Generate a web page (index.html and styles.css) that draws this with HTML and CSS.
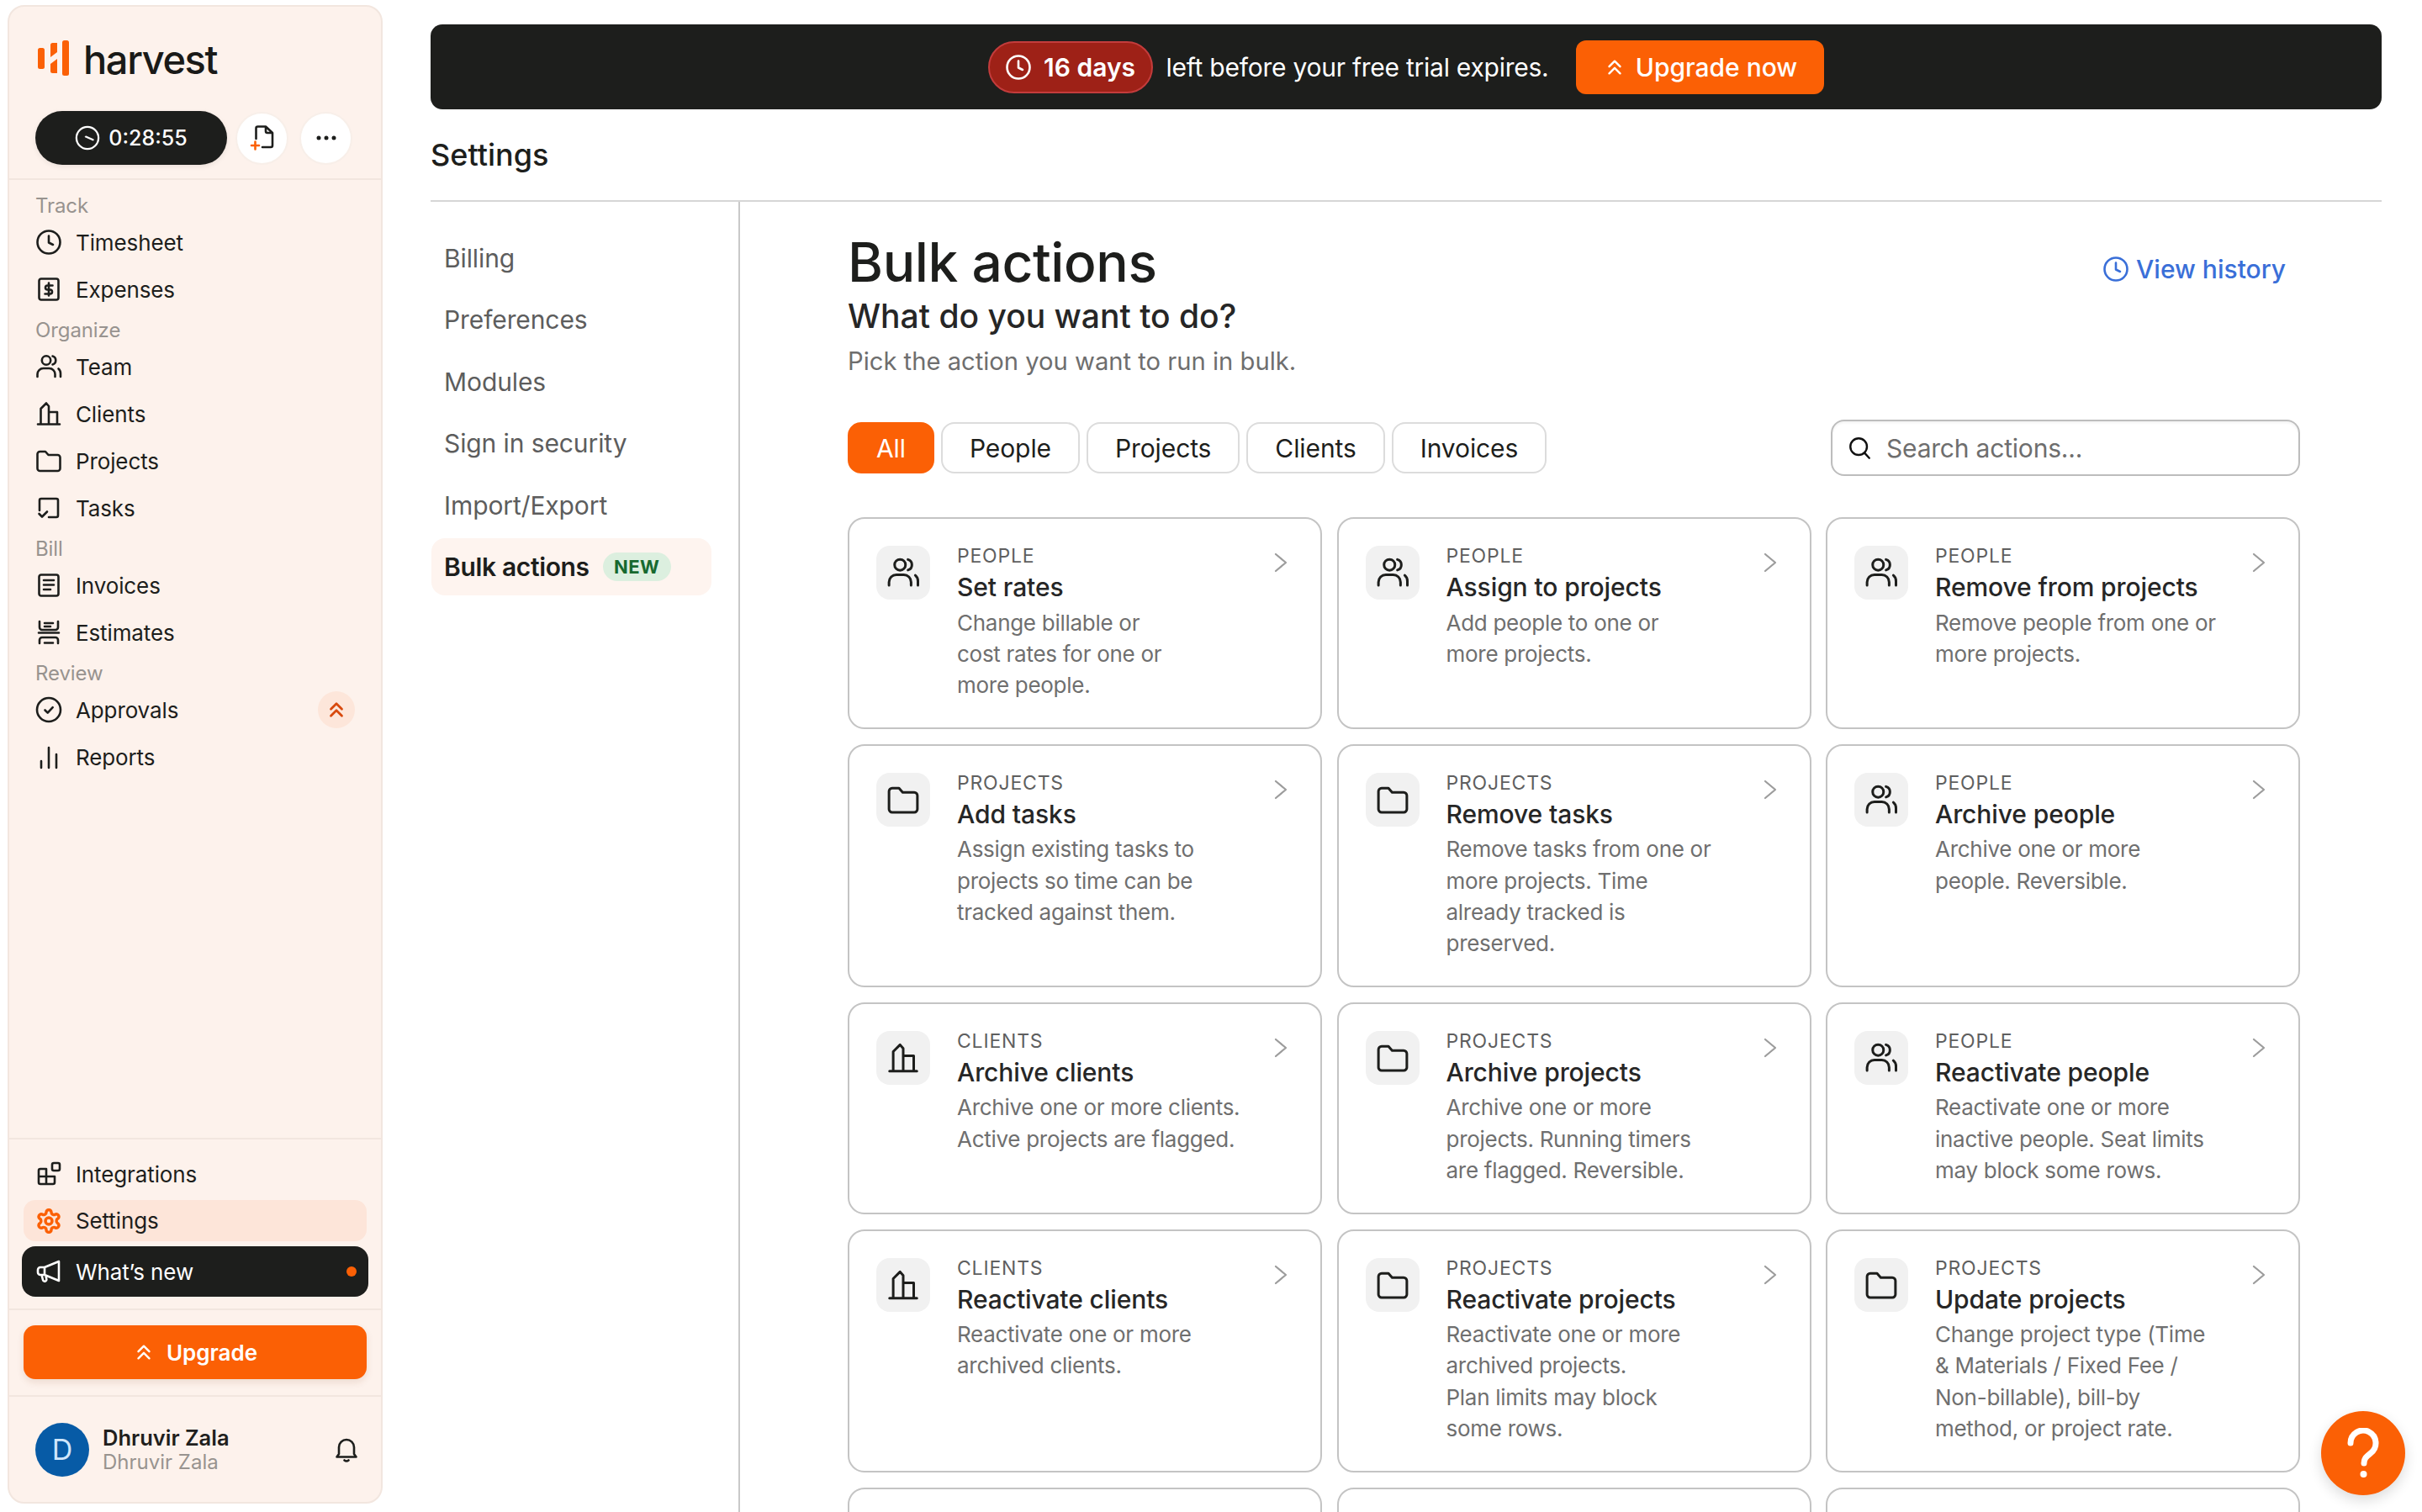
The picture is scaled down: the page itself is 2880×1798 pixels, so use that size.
FILE: index.html
```html
<!DOCTYPE html>
<html lang="en">
<head>
<meta charset="utf-8">
<title>Bulk actions - Harvest</title>
<link rel="stylesheet" href="styles.css">
</head>
<body>
<svg class="sprite" aria-hidden="true">
  <symbol id="i-clock" viewBox="0 0 32 32"><circle cx="16" cy="16" r="13.5"/><path d="M16 8.5V16.5L21 19"/></symbol>
  <symbol id="i-expense" viewBox="0 0 32 32"><rect x="4.5" y="3.5" width="23" height="25" rx="2.5"/><path d="M20.5 11.5H14.500a2.500 2.500 0 0 0 0 5h3a2.500 2.500 0 0 1 0 5H11.500M16 8.500v15"/></symbol>
  <symbol id="i-team" viewBox="0 0 32 32"><circle cx="13" cy="8.500" r="5.200"/><path d="M2.500 28v-3a7 7 0 0 1 7-7h7a7 7 0 0 1 7 7v3M20.500 3.500a5.200 5.200 0 0 1 0 10M27.500 18.500a7 7 0 0 1 2.500 5.500v4"/></symbol>
  <symbol id="i-clients" viewBox="0 0 32 32"><path d="M3 28.500H29M6.500 28.500V10L13 3.500L16 7V28.500M16 14H26V28.500"/></symbol>
  <symbol id="i-folder" viewBox="0 0 32 32"><path d="M2.500 8a3 3 0 0 1 3-3h6.500l3.500 4h11a3 3 0 0 1 3 3v13a3 3 0 0 1-3 3H5.500a3 3 0 0 1-3-3z"/></symbol>
  <symbol id="i-tasks" viewBox="0 0 32 32"><path d="M5 19V7a2 2 0 0 1 2-2h18a2 2 0 0 1 2 2v18a2 2 0 0 1-2 2H16M4.500 23l3.500 3.500l6-6"/></symbol>
  <symbol id="i-invoice" viewBox="0 0 32 32"><rect x="4.500" y="3.500" width="23" height="25" rx="2.500"/><path d="M10 10H22M10 15.500H22M10 21H18"/></symbol>
  <symbol id="i-estimate" viewBox="0 0 32 32"><path d="M5 3v7a3 3 0 0 0 3 3h16a3 3 0 0 0 3-3V3M11 5H21M11 9H18M4 16.500H28M5 29v-4a3 3 0 0 1 3-3h16a3 3 0 0 1 3 3v4M11 28.500H21"/></symbol>
  <symbol id="i-approve" viewBox="0 0 32 32"><circle cx="16" cy="16" r="14"/><path d="M11.500 16.500l3.200 3.200l6-6.500"/></symbol>
  <symbol id="i-reports" viewBox="0 0 32 32"><path d="M7 29V21M16 29V5M25 29V13"/></symbol>
  <symbol id="i-integrations" viewBox="0 0 32 32"><path d="M13 10H6a2 2 0 0 0-2 2V26a2 2 0 0 0 2 2H21a2 2 0 0 0 2-2V19H4M13 10V28"/><rect x="20" y="3" width="9" height="9" rx="2"/></symbol>
  <symbol id="i-gear" viewBox="0 0 24 24"><path d="M12.220 2h-.44a2 2 0 0 0-2 2v.18a2 2 0 0 1-1 1.730l-.43.25a2 2 0 0 1-2 0l-.15-.08a2 2 0 0 0-2.730.73l-.22.38a2 2 0 0 0 .73 2.730l.15.1a2 2 0 0 1 1 1.720v.51a2 2 0 0 1-1 1.740l-.15.09a2 2 0 0 0-.73 2.730l.22.38a2 2 0 0 0 2.730.73l.15-.08a2 2 0 0 1 2 0l.43.25a2 2 0 0 1 1 1.730V20a2 2 0 0 0 2 2h.44a2 2 0 0 0 2-2v-.18a2 2 0 0 1 1-1.730l.43-.25a2 2 0 0 1 2 0l.15.08a2 2 0 0 0 2.730-.73l.22-.39a2 2 0 0 0-.73-2.730l-.15-.08a2 2 0 0 1-1-1.740v-.5a2 2 0 0 1 1-1.740l.15-.09a2 2 0 0 0 .73-2.730l-.22-.38a2 2 0 0 0-2.730-.73l-.15.08a2 2 0 0 1-2 0l-.43-.25a2 2 0 0 1-1-1.730V4a2 2 0 0 0-2-2z"/><circle cx="12" cy="12" r="3"/></symbol>
  <symbol id="i-mega" viewBox="0 0 32 32"><path d="M28 4L11 11H6a3 3 0 0 0-3 3v3a3 3 0 0 0 3 3h5L28 27zM11 11v9M7.500 20l1.500 6a2.200 2.200 0 0 0 4.300-1l-1-4.200"/></symbol>
  <symbol id="i-up" viewBox="0 0 32 32"><path d="M8 15L16 7L24 15M8 25L16 17L24 25"/></symbol>
  <symbol id="i-bell" viewBox="0 0 32 32"><path d="M7 21V13a9 9 0 0 1 18 0v8l2.500 3.500H4.500zM13.500 28.500q2.500 2 5 0"/></symbol>
  <symbol id="i-search" viewBox="0 0 32 32"><circle cx="14" cy="14" r="10.500"/><path d="M21.500 22l6 6.500"/></symbol>
  <symbol id="i-chev" viewBox="0 0 16 24"><path d="M2 2L14 12L2 22"/></symbol>
</svg>

<aside class="sidebar">
  <div class="side-head">
    <div class="brand">
      <svg class="logo" viewBox="0 0 38 42" aria-hidden="true">
        <rect x="0" y="9" width="8" height="25" rx="2.500"/>
        <path d="M15 5.500a2.500 2.500 0 0 1 2.500-2.500H23V14L15 20z"/>
        <path d="M15 28L23 22V39H17.500a2.500 2.500 0 0 1-2.500-2.500z"/>
        <rect x="29" y="0" width="8" height="42" rx="2.500"/>
      </svg>
      <span class="wordmark">harvest</span>
    </div>
    <div class="timer-row">
      <button class="timer">
        <svg class="timer-ic" viewBox="0 0 32 32" aria-hidden="true"><circle cx="16" cy="16" r="14"/><path d="M14 14.500L23 18.500"/></svg>
        <span>0:28:55</span>
      </button>
      <button class="round">
        <svg class="round-ic" viewBox="0 0 32 32" aria-hidden="true"><path d="M8.500 17V4.500a2 2 0 0 1 2-2H20l8 7.500v15a2 2 0 0 1-2 2H16M20 3v5a2 2 0 0 0 2 2h6"/><path class="plus" d="M3 25H12M7.500 20.500V29.500"/></svg>
      </button>
      <button class="round">
        <svg class="round-ic" viewBox="0 0 32 32" aria-hidden="true"><circle class="dot" cx="7" cy="16" r="2.500"/><circle class="dot" cx="16" cy="16" r="2.500"/><circle class="dot" cx="25" cy="16" r="2.500"/></svg>
      </button>
    </div>
  </div>

  <nav class="side-nav">
    <div class="group-label first">Track</div>
    <a class="side-item"><svg class="ic"><use href="#i-clock"/></svg>Timesheet</a>
    <a class="side-item"><svg class="ic"><use href="#i-expense"/></svg>Expenses</a>
    <div class="group-label">Organize</div>
    <a class="side-item"><svg class="ic"><use href="#i-team"/></svg>Team</a>
    <a class="side-item"><svg class="ic"><use href="#i-clients"/></svg>Clients</a>
    <a class="side-item"><svg class="ic"><use href="#i-folder"/></svg>Projects</a>
    <a class="side-item"><svg class="ic"><use href="#i-tasks"/></svg>Tasks</a>
    <div class="group-label">Bill</div>
    <a class="side-item"><svg class="ic"><use href="#i-invoice"/></svg>Invoices</a>
    <a class="side-item"><svg class="ic"><use href="#i-estimate"/></svg>Estimates</a>
    <div class="group-label">Review</div>
    <a class="side-item"><svg class="ic"><use href="#i-approve"/></svg>Approvals<span class="up-badge"><svg class="up-ic"><use href="#i-up"/></svg></span></a>
    <a class="side-item"><svg class="ic"><use href="#i-reports"/></svg>Reports</a>
  </nav>

  <div class="side-bottom">
    <a class="side-item"><svg class="ic"><use href="#i-integrations"/></svg>Integrations</a>
    <a class="side-item settings"><svg class="ic orange"><use href="#i-gear"/></svg>Settings</a>
    <a class="side-item whatsnew"><svg class="ic"><use href="#i-mega"/></svg>What’s new<span class="new-dot"></span></a>
  </div>
  <div class="side-upgrade">
    <button class="upgrade"><svg class="up-white"><use href="#i-up"/></svg>Upgrade</button>
  </div>
  <div class="side-user">
    <div class="avatar">D</div>
    <div class="user-text">
      <div class="user-name">Dhruvir Zala</div>
      <div class="user-sub">Dhruvir Zala</div>
    </div>
    <svg class="bell"><use href="#i-bell"/></svg>
  </div>
</aside>

<main class="main">
  <div class="banner">
    <span class="days"><svg class="days-ic"><use href="#i-clock"/></svg>16 days</span>
    <span class="banner-text">left before your free trial expires.</span>
    <button class="banner-btn"><svg class="btn-up"><use href="#i-up"/></svg>Upgrade now</button>
  </div>
  <div class="page-title">Settings</div>
  <div class="panes">
    <nav class="settings-nav">
      <a class="set-item">Billing</a>
      <a class="set-item">Preferences</a>
      <a class="set-item">Modules</a>
      <a class="set-item">Sign in security</a>
      <a class="set-item">Import/Export</a>
      <a class="set-item active">Bulk actions<span class="new-badge">NEW</span></a>
    </nav>
    <section class="content">
      <header class="head">
        <div>
          <h1 class="h1">Bulk actions</h1>
          <h2 class="h2">What do you want to do?</h2>
          <p class="lede">Pick the action you want to run in bulk.</p>
        </div>
        <a class="history"><svg class="hist-ic"><use href="#i-clock"/></svg>View history</a>
      </header>
      <div class="toolbar">
        <div class="chips">
          <button class="chip on">All</button>
          <button class="chip">People</button>
          <button class="chip">Projects</button>
          <button class="chip">Clients</button>
          <button class="chip">Invoices</button>
        </div>
        <div class="search"><svg class="search-ic"><use href="#i-search"/></svg><span>Search actions...</span></div>
      </div>
      <div class="grid">
        <article class="card"><div class="card-ic"><svg class="cic"><use href="#i-team"/></svg></div><div class="card-body"><div class="cat">PEOPLE</div><div class="name">Set rates</div><div class="desc">Change billable or<br>cost rates for one or<br>more people.</div></div><svg class="chev"><use href="#i-chev"/></svg></article>
        <article class="card"><div class="card-ic"><svg class="cic"><use href="#i-team"/></svg></div><div class="card-body"><div class="cat">PEOPLE</div><div class="name">Assign to projects</div><div class="desc">Add people to one or<br>more projects.</div></div><svg class="chev"><use href="#i-chev"/></svg></article>
        <article class="card"><div class="card-ic"><svg class="cic"><use href="#i-team"/></svg></div><div class="card-body"><div class="cat">PEOPLE</div><div class="name">Remove from projects</div><div class="desc">Remove people from one or<br>more projects.</div></div><svg class="chev"><use href="#i-chev"/></svg></article>

        <article class="card"><div class="card-ic"><svg class="cic"><use href="#i-folder"/></svg></div><div class="card-body"><div class="cat">PROJECTS</div><div class="name">Add tasks</div><div class="desc">Assign existing tasks to<br>projects so time can be<br>tracked against them.</div></div><svg class="chev"><use href="#i-chev"/></svg></article>
        <article class="card"><div class="card-ic"><svg class="cic"><use href="#i-folder"/></svg></div><div class="card-body"><div class="cat">PROJECTS</div><div class="name">Remove tasks</div><div class="desc">Remove tasks from one or<br>more projects. Time<br>already tracked is<br>preserved.</div></div><svg class="chev"><use href="#i-chev"/></svg></article>
        <article class="card"><div class="card-ic"><svg class="cic"><use href="#i-team"/></svg></div><div class="card-body"><div class="cat">PEOPLE</div><div class="name">Archive people</div><div class="desc">Archive one or more<br>people. Reversible.</div></div><svg class="chev"><use href="#i-chev"/></svg></article>

        <article class="card"><div class="card-ic"><svg class="cic"><use href="#i-clients"/></svg></div><div class="card-body"><div class="cat">CLIENTS</div><div class="name">Archive clients</div><div class="desc">Archive one or more clients.<br>Active projects are flagged.</div></div><svg class="chev"><use href="#i-chev"/></svg></article>
        <article class="card"><div class="card-ic"><svg class="cic"><use href="#i-folder"/></svg></div><div class="card-body"><div class="cat">PROJECTS</div><div class="name">Archive projects</div><div class="desc">Archive one or more<br>projects. Running timers<br>are flagged. Reversible.</div></div><svg class="chev"><use href="#i-chev"/></svg></article>
        <article class="card"><div class="card-ic"><svg class="cic"><use href="#i-team"/></svg></div><div class="card-body"><div class="cat">PEOPLE</div><div class="name">Reactivate people</div><div class="desc">Reactivate one or more<br>inactive people. Seat limits<br>may block some rows.</div></div><svg class="chev"><use href="#i-chev"/></svg></article>

        <article class="card"><div class="card-ic"><svg class="cic"><use href="#i-clients"/></svg></div><div class="card-body"><div class="cat">CLIENTS</div><div class="name">Reactivate clients</div><div class="desc">Reactivate one or more<br>archived clients.</div></div><svg class="chev"><use href="#i-chev"/></svg></article>
        <article class="card"><div class="card-ic"><svg class="cic"><use href="#i-folder"/></svg></div><div class="card-body"><div class="cat">PROJECTS</div><div class="name">Reactivate projects</div><div class="desc">Reactivate one or more<br>archived projects.<br>Plan limits may block<br>some rows.</div></div><svg class="chev"><use href="#i-chev"/></svg></article>
        <article class="card"><div class="card-ic"><svg class="cic"><use href="#i-folder"/></svg></div><div class="card-body"><div class="cat">PROJECTS</div><div class="name">Update projects</div><div class="desc">Change project type (Time<br>&amp; Materials / Fixed Fee /<br>Non-billable), bill-by<br>method, or project rate.</div></div><svg class="chev"><use href="#i-chev"/></svg></article>

        <article class="card empty"></article>
        <article class="card empty"></article>
        <article class="card empty"></article>
      </div>
    </section>
  </div>
</main>

<button class="help" aria-label="Help">
  <svg class="help-ic" viewBox="0 0 40 60" aria-hidden="true"><path d="M5 18a15 15 0 1 1 24 12c-5 4-8 6-8 12"/><circle class="help-dot" cx="20.500" cy="55" r="4"/></svg>
</button>
</body>
</html>
```
FILE: styles.css
```css
* { box-sizing: border-box; }
html, body { height: 100%; }
body {
  margin: 0;
  width: 2880px;
  height: 1798px;
  overflow: hidden;
  display: flex;
  align-items: flex-start;
  background: #fff;
  color: #1d1e1c;
  font-family: Inter, "Liberation Sans", sans-serif;
}
button { font-family: inherit; border: 0; padding: 0; cursor: pointer; }
a { color: inherit; text-decoration: none; }
h1, h2, p { margin: 0; }
.sprite { position: absolute; width: 0; height: 0; }
svg { fill: none; stroke: currentColor; stroke-width: 2.6; stroke-linecap: round; stroke-linejoin: round; flex: none; }

/* Sidebar */
.sidebar {
  flex: none;
  width: 446px;
  height: 1782px;
  margin: 6px 0 0 9px;
  background: #fdf2ec;
  border: 2px solid #f2e6df;
  border-radius: 20px;
  display: flex;
  flex-direction: column;
}
.side-head { padding: 40px 31px 16px; border-bottom: 2px solid #f2e6df; }
.brand { display: flex; align-items: center; height: 42px; margin-bottom: 42px; padding-left: 3px; }
.logo { width: 38px; height: 42px; fill: #fb6005; stroke: none; }
.wordmark { margin-left: 16px; padding-top: 3px; font-size: 47px; font-weight: 500; letter-spacing: -1.4px; line-height: 42px; color: #1a1a18; }
.timer-row { display: flex; align-items: center; }
.timer {
  width: 228px; height: 64px; border-radius: 32px;
  background: #1d1e1c; color: #fff;
  display: flex; align-items: center; justify-content: center; gap: 10px;
  font-size: 25px; font-weight: 500;
  box-shadow: 0 2px 6px rgba(0,0,0,.08);
}
.timer-ic { width: 30px; height: 30px; stroke-width: 2.4; }
.round {
  width: 63px; height: 63px; border-radius: 50%;
  background: #fff; color: #1d1e1c; margin-left: 10px;
  border: 2px solid #f8efe9;
  display: flex; align-items: center; justify-content: center;
}
.round + .round { margin-left: 13px; }
.round-ic { width: 32px; height: 32px; }
.round-ic .plus { stroke: #fb6005; }
.round-ic .dot { fill: currentColor; stroke: none; }

.side-nav { flex: 1; padding: 16px 31px 0; }
.group-label { height: 30px; line-height: 30px; margin-top: 6px; font-size: 24px; color: #98938f; letter-spacing: -.1px; }
.group-label.first { margin-top: 0; }
.side-item {
  display: flex; align-items: center; gap: 16px;
  height: 56px;
  font-size: 26px; letter-spacing: -.12px; color: #1d1e1c;
}
.ic { width: 32px; height: 32px; }
.ic.orange { color: #fb6005; }
.up-badge {
  margin-left: auto;
  width: 44px; height: 44px; border-radius: 50%; background: #fde6da;
  display: flex; align-items: center; justify-content: center;
}
.up-ic { width: 26px; height: 26px; color: #d8490d; stroke-width: 3.400; }

.side-bottom { padding: 13px 17px 14px; border-top: 2px solid #f2e6df; border-bottom: 2px solid #f2e6df; }
.side-bottom .side-item { padding-left: 14px; }
.side-item.settings { height: 49px; margin-top: 3px; border-radius: 14px; background: #fde5d9; }
.side-item.whatsnew {
  height: 60px; margin: 6px -2px 0; padding-left: 16px; padding-right: 14px;
  border-radius: 16px; background: #1d1e1c; color: #fff;
}
.new-dot { margin-left: auto; width: 12px; height: 12px; border-radius: 50%; background: #fb6005; }
.side-upgrade { padding: 18px 17px 19px; border-bottom: 2px solid #f2e6df; }
.upgrade {
  width: 100%; height: 64px; border-radius: 14px;
  background: #fb6005; color: #fff;
  display: flex; align-items: center; justify-content: center; gap: 14px;
  font-size: 26px; font-weight: 600;
  box-shadow: 0 4px 8px rgba(120,60,20,.12);
}
.up-white { width: 26px; height: 26px; stroke-width: 3; }
.side-user { display: flex; align-items: center; padding: 0 25px 0 31px; height: 125px; }
.avatar {
  width: 64px; height: 64px; border-radius: 50%;
  background: #075ba6; color: #cfe6fb;
  display: flex; align-items: center; justify-content: center;
  font-size: 34px; flex: none;
}
.user-text { margin-left: 16px; flex: 1; }
.user-name { font-size: 25.500px; font-weight: 600; line-height: 30px; color: #211f1d; }
.user-sub { font-size: 24px; line-height: 28px; color: #98938f; }
.bell { width: 32px; height: 32px; }

/* Main */
.main { margin-left: 57px; width: 2320px; flex: none; }
.banner {
  margin-top: 29px; height: 101px; border-radius: 14px;
  background: #1d1e1c; color: #fff;
  display: flex; align-items: center; justify-content: center;
  font-size: 30px;
}
.days {
  width: 196px; height: 62px; border-radius: 31px;
  background: #9e2117; border: 2px solid #c33c3c;
  display: flex; align-items: center; justify-content: center; gap: 14px;
  font-weight: 600;
}
.days-ic { width: 32px; height: 32px; }
.banner-text { margin: 0 33px 0 16px; letter-spacing: -.25px; }
.banner-btn {
  width: 295px; height: 64px; border-radius: 12px;
  background: #fb6005; color: #fff;
  display: flex; align-items: center; justify-content: center; gap: 12px;
  font-size: 30px; font-weight: 500;
}
.btn-up { width: 26px; height: 26px; stroke-width: 3; }
.page-title {
  height: 110px; line-height: 108px;
  font-size: 36px; font-weight: 500;
  border-bottom: 2px solid #d6d6d6;
}
.panes { display: flex; align-items: stretch; height: 1560px; }
.settings-nav {
  flex: none; width: 368px; padding: 33px 32px 0 1px;
  border-right: 2px solid #c9c9c9;
  display: flex; flex-direction: column; gap: 5.400px;
}
.set-item {
  display: flex; align-items: center; height: 68px;
  padding-left: 15px; border-radius: 16px;
  font-size: 30px; letter-spacing: -.1px; color: #5d5d5d;
}
.set-item.active { background: #fef4ef; color: #1d1e1c; font-weight: 600; letter-spacing: -.35px; }
.new-badge {
  margin-left: 16px; width: 81px; height: 34px; border-radius: 17px;
  background: #dcefdf; color: #17692f;
  display: flex; align-items: center; justify-content: center;
  font-size: 22px; font-weight: 700; letter-spacing: .5px;
}
.content { flex: 1; min-width: 0; padding: 34px 97px 0 128px; }
.head { display: flex; justify-content: space-between; align-items: flex-start; }
.h1 { font-size: 64px; line-height: 76px; font-weight: 500; letter-spacing: -.4px; color: #1d1e1c; }
.h2 { margin-top: 1px; font-size: 39px; line-height: 50px; font-weight: 500; color: #262626; }
.lede { margin-top: 9px; font-size: 29.200px; line-height: 40px; color: #6e6e6e; }
.history {
  margin-top: 26px; margin-right: 17px;
  display: flex; align-items: center; gap: 8px;
  height: 40px; font-size: 30px; font-weight: 500; color: #3a6fd8;
}
.hist-ic { width: 32px; height: 32px; }
.toolbar { display: flex; align-items: center; justify-content: space-between; margin-top: 49px; height: 67px; }
.chips { display: flex; gap: 8px; }
.chip {
  height: 61px; padding: 0 32px; border-radius: 16px;
  border: 2px solid #dcdcdc; background: #fff; color: #1d1e1c;
  font-size: 30px; letter-spacing: -.1px;
}
.chip.on { background: #fb6005; border-color: #fb6005; color: #fff; }
.search {
  width: 558px; height: 67px; border-radius: 16px;
  border: 2px solid #bdbdbd;
  display: flex; align-items: center; gap: 16px; padding-left: 18px;
  font-size: 30px; letter-spacing: -.2px; color: #6e6e6e;
  box-shadow: inset 0 2px 3px rgba(0,0,0,.05);
}
.search-ic { width: 30px; height: 30px; color: #111; }
.grid { display: grid; grid-template-columns: repeat(3, 1fr); gap: 18px 17.500px; margin-top: 49px; }
.card {
  display: flex; align-items: flex-start;
  padding: 30px 39px 31px 32px;
  border: 2px solid #c4c4c4; border-radius: 20px; background: #fff;
}
.card.empty { min-height: 252px; }
.card-ic {
  flex: none; width: 64px; height: 64px; margin-top: 2px; border-radius: 16px;
  background: #f1f1f1; display: flex; align-items: center; justify-content: center;
}
.cic { width: 40px; height: 40px; stroke-width: 2.400; color: #1d1e1c; }
.card-body { flex: 1; margin-left: 32px; min-width: 0; }
.cat { font-size: 23px; line-height: 28px; letter-spacing: .8px; color: #5f5f5f; }
.name { margin-top: 3px; font-size: 30px; line-height: 40px; font-weight: 550; letter-spacing: -.1px; color: #262626; }
.desc { margin-top: 3.500px; font-size: 26px; line-height: 37.400px; letter-spacing: -.28px; color: #6f6f6f; white-space: nowrap; }
.chev { width: 16px; height: 24px; margin-top: 10px; color: #9c9c9c; stroke-width: 2.200; }

.help {
  position: fixed; right: 20px; bottom: 20px;
  width: 100px; height: 100px; border-radius: 50%;
  background: #fb6005;
  display: flex; align-items: center; justify-content: center;
  box-shadow: 0 6px 16px rgba(0,0,0,.14);
}
.help-ic { width: 40px; height: 60px; color: #fff; stroke-width: 7; }
.help-dot { fill: #fff; stroke: none; }
```
